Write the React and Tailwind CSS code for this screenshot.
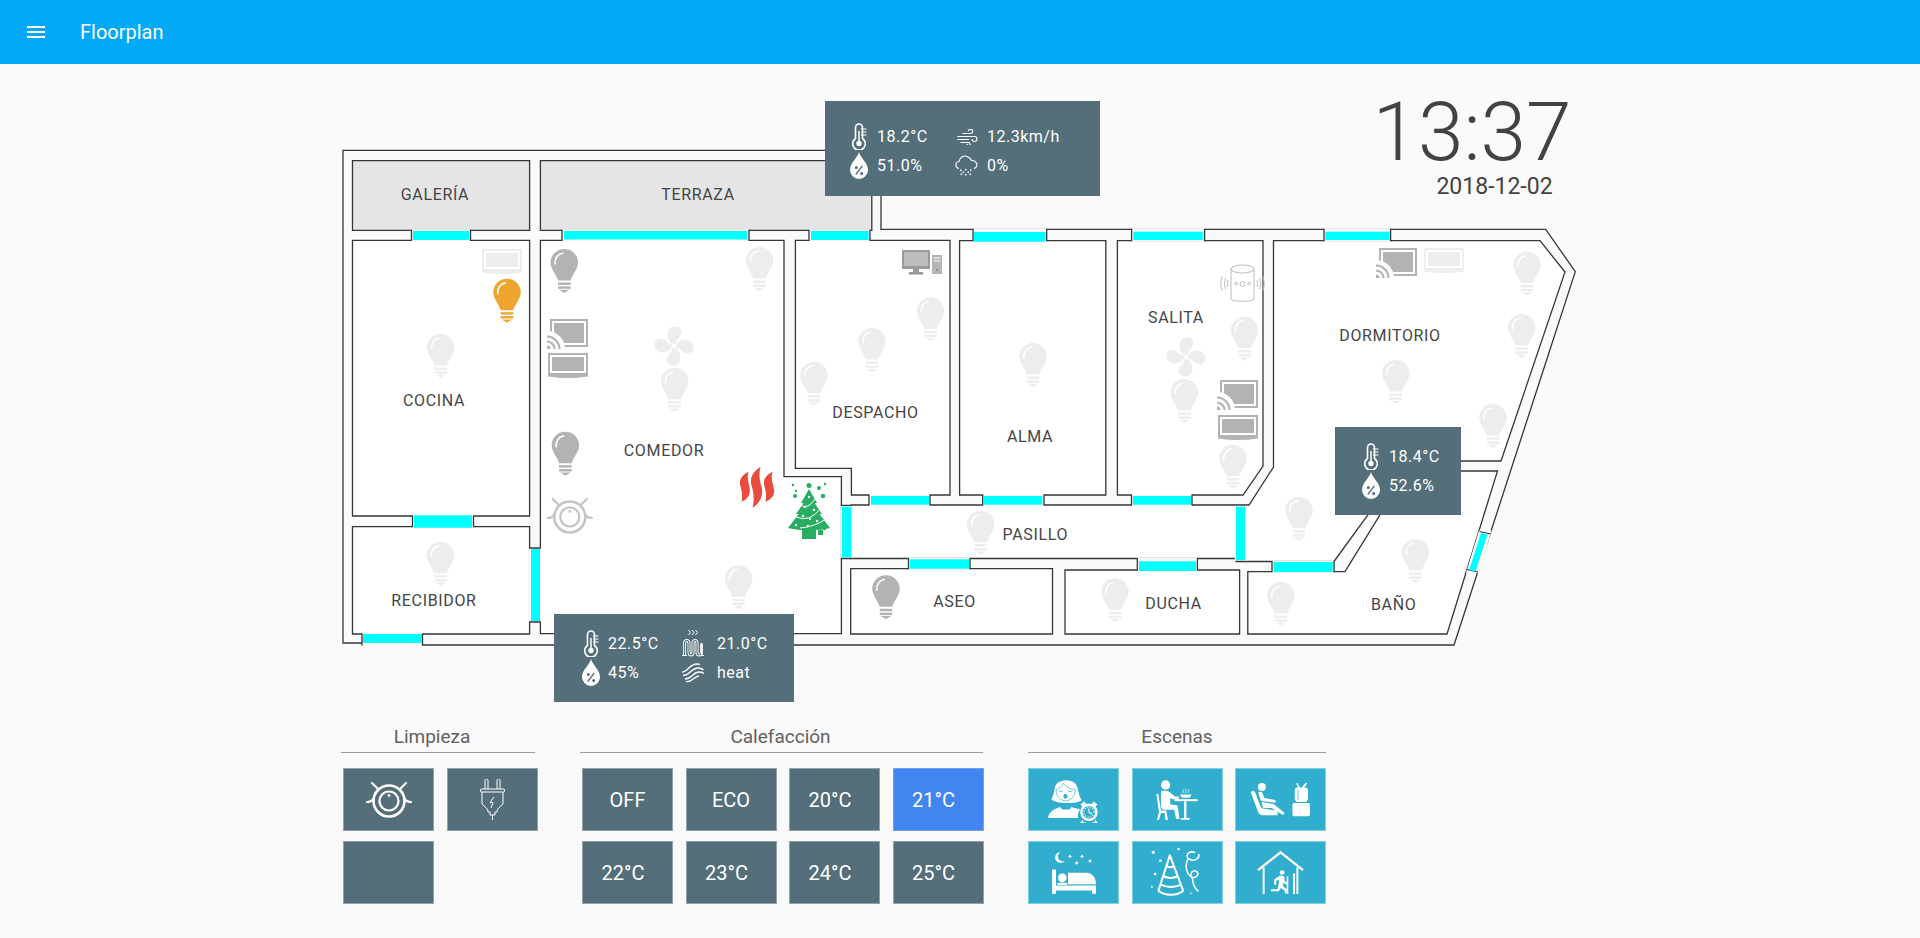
import React from 'react';

const WALL = '#363636';

const ROOMS = [
  { points: '352.5,160.7 529.6,160.7 529.6,230.3 352.5,230.3', fill: '#e5e5e5' }, // galeria
  { points: '540.4,160.7 871.8,160.7 871.8,230.3 540.4,230.3', fill: '#e5e5e5' }, // terraza
  { points: '352.5,240.3 529.6,240.3 529.6,516 352.5,516' }, // cocina
  { points: '352.5,526.7 529.6,526.7 529.6,634 352.5,634' }, // recibidor
  { points: '540.4,240.3 784,240.3 784,476.7 841.4,476.7 841.4,633.7 540.4,633.7' }, // comedor
  { points: '795.4,240.3 950,240.3 950,495 851.4,495 851.4,468.3 795.4,468.3' }, // despacho
  { points: '959.6,240.7 1105.8,240.7 1105.8,495 959.6,495' }, // alma
  { points: '1117.4,240.7 1263,240.7 1263,466 1243,495 1117.4,495' }, // salita
  { points: '851.4,505 1236,505 1236,558.5 851.4,558.5' }, // pasillo
  { points: '1273.5,240.7 1540,240.7 1565,272 1501,461 1407,461 1334,561.5 1245,561.5 1245,505 1249,505 1273.5,467' }, // dormitorio
  { points: '850.7,568.7 1052.5,568.7 1052.5,634 850.7,634' }, // aseo
  { points: '1065,570 1239.6,570 1239.6,634 1065,634' }, // ducha
  { points: '1247.8,571.7 1345,571.7 1407,471 1497.5,471 1447,634 1247.8,634' }, // bano
];

const H_DOORS = [
  [413, 469, 231, 240, 411.5, 470.5, 230.3, 240.3],
  [564, 747, 231, 239.5, 562, 749, 230.3, 240.3],
  [811, 868.6, 231, 240, 809, 870, 230.3, 240.3],
  [974, 1045.3, 232, 241.7, 973, 1046.7, 229.4, 240.7],
  [1133.4, 1202.8, 231.7, 240, 1131.6, 1204.6, 229.4, 240.7],
  [1325.4, 1389.6, 231.7, 240, 1324, 1390.6, 229.4, 240.7],
  [414, 472, 515.3, 527.7, 412.5, 473.5, 516, 526.7],
  [363, 422, 634, 643, 362, 422.5, 634, 645],
  [871, 929, 496, 504.7, 869, 930, 495, 505],
  [983.7, 1042.3, 496, 504.7, 982.7, 1044, 495, 505],
  [1133, 1191, 496, 504.7, 1131.5, 1192, 495, 505],
  [910, 969, 559.3, 568.7, 908.5, 970, 558.5, 568.7],
  [1139, 1196, 561.3, 571, 1137.3, 1197.4, 558.5, 570],
  [1273.5, 1332.7, 562, 572, 1272, 1334, 561.5, 571.7],
];

const V_DOORS = [
  [531, 540, 549, 621, 529.6, 540.4, 548, 622],
  [841.8, 851.4, 506.7, 557.3, 841.4, 851.4, 505.3, 558.5],
  [1236, 1245, 506.7, 560, 1236, 1245, 505, 561.5],
];

const BULBS = [
  [564.3, 249, '#b3b3b3'], [759.6, 247, '#ededed'], [507, 278.7, '#eea630'], [440.7, 334, '#ededed'],
  [674.6, 367.7, '#ededed'], [872, 328, '#ededed'], [814, 361.7, '#ededed'], [930.5, 297.3, '#ededed'],
  [1033, 343, '#ededed'], [1244.5, 316.7, '#ededed'], [1184.4, 379, '#ededed'], [1527, 251.5, '#ededed'],
  [1521.7, 314, '#ededed'], [1395.7, 360, '#ededed'], [1493, 404, '#ededed'], [565.4, 431.7, '#b3b3b3'],
  [440.4, 541.7, '#ededed'], [738.6, 565.3, '#ededed'], [1233, 444.7, '#ededed'], [980.7, 510.7, '#ededed'],
  [1299, 496.7, '#ededed'], [886, 575.3, '#b3b3b3'], [1115, 578.3, '#ededed'], [1280.8, 582, '#ededed'],
  [1415.5, 539, '#ededed'],
];

const LABELS = [
  ['GALERÍA', 435, 194], ['TERRAZA', 698, 194], ['COCINA', 434, 400.7], ['COMEDOR', 664, 450.7],
  ['RECIBIDOR', 434, 600.7], ['DESPACHO', 875.5, 412.3], ['ALMA', 1030, 436.7], ['PASILLO', 1035.3, 534.7],
  ['ASEO', 954.5, 601.7], ['DUCHA', 1173.5, 603.7], ['BAÑO', 1393.7, 604.7], ['SALITA', 1176, 317],
  ['DORMITORIO', 1390, 335.7],
];

function Bulb({ x, y, color }) {
  return (
    <g transform={`translate(${x - 13.75} ${y})`}>
      <path d="M13.75 0C21.5 0 27.5 6 27.5 13.5C27.5 20 22.5 24 20 31.5H7.5C5 24 0 20 0 13.5C0 6 6 0 13.75 0Z" fill={color} />
      <path d="M4.6 15C4 9.5 7 5 12 4.2" fill="none" stroke="#fff" strokeWidth="1.6" strokeLinecap="round" />
      <rect x="7.5" y="33.5" width="12.5" height="2.4" fill={color} />
      <rect x="7.5" y="37.4" width="12.5" height="2.4" fill={color} />
      <path d="M8.5 40.8H19L13.75 44Z" fill={color} />
    </g>
  );
}

function CastTv({ x, y }) {
  return (
    <g transform={`translate(${x} ${y})`}>
      <rect x="3" y="0" width="38" height="28" fill="#b3b3b3" />
      <rect x="5" y="2" width="34" height="24" fill="#fff" />
      <rect x="7" y="4" width="30" height="20" fill="#b3b3b3" />
      <path d="M0 30V12A18 18 0 0 1 18 30Z" fill="#fff" />
      <path d="M0 17.5A12.5 12.5 0 0 1 12.5 30M0 22.5A7.5 7.5 0 0 1 7.5 30" fill="none" stroke="#b3b3b3" strokeWidth="2.2" />
      <path d="M0 26.5A3.5 3.5 0 0 1 3.5 30H0Z" fill="#b3b3b3" />
    </g>
  );
}

function Tv({ x, y, color }) {
  return (
    <g transform={`translate(${x} ${y})`}>
      <rect x="0" y="0" width="40" height="22" fill={color} />
      <rect x="2" y="2" width="36" height="18" fill="#fff" />
      <rect x="4" y="4" width="32" height="14" fill={color} />
      <path d="M0 21.5H40V23.5Q20 26.5 0 23.5Z" fill={color} />
    </g>
  );
}

function Fan({ x, y }) {
  const blade = 'M17.5 15.5C12.5 11 13 .5 20.5 .3C27.5 0 28.5 6.500 24 11C21.800 13 21.500 15 22 16.500Z';
  return (
    <g transform={`translate(${x - 2} ${y - 1.8}) scale(1.1)`} fill="#ededed">
      <path d={blade} />
      <path d={blade} transform="rotate(90 20 18)" />
      <path d={blade} transform="rotate(180 20 18)" />
      <path d={blade} transform="rotate(270 20 18)" />
    </g>
  );
}

function RoombaShape({ color }) {
  return (
    <g fill="none" stroke={color} strokeLinecap="round">
      <circle cx="23" cy="19" r="15.500" strokeWidth="2.600" />
      <circle cx="23" cy="19" r="9.500" strokeWidth="2.200" />
      <circle cx="23" cy="13.500" r="1.400" fill={color} strokeWidth="0" />
      <path d="M6 1L12 7M40 1L34 7" strokeWidth="2.200" />
      <path d="M1 20Q5 20 7.500 17M45 20Q41 20 38.500 17" strokeWidth="2.200" />
    </g>
  );
}

function Tree({ x, y }) {
  return (
    <g transform={`translate(${x} ${y})`}>
      <path d="M21 6L29 20H26.500L34 31H31.500L42 45C30 48 12 48 0 45L10.500 31H8L15.500 20H13Z" fill="#27ae60" />
      <rect x="14" y="44" width="14" height="12" fill="#27ae60" />
      <path d="M30 47h5v5h-5zM35 44h3v3h-3z" fill="#27ae60" />
      <path d="M12 22Q20 27 27 16M8 34Q22 40 33 25M12 45Q26 44 38 36" fill="none" stroke="#fff" strokeWidth="1" />
      <g fill="#fff">
        <circle cx="21" cy="14" r="1.200" /><circle cx="17" cy="24" r="1.200" /><circle cx="26" cy="27" r="1.200" />
        <circle cx="15" cy="33" r="1.200" /><circle cx="22" cy="36" r="1.200" /><circle cx="29" cy="38" r="1.200" />
        <circle cx="8" cy="42" r="1.200" /><circle cx="20" cy="43" r="1.200" />
      </g>
      <g fill="#27ae60">
        <circle cx="21" cy="2.500" r="2.500" /><circle cx="5" cy="2" r="1.200" /><circle cx="37" cy="1" r="1.200" />
        <circle cx="8" cy="8" r="1.200" /><circle cx="31" cy="5" r="2" /><circle cx="7" cy="13" r="2" /><circle cx="35" cy="13" r="2.200" />
      </g>
    </g>
  );
}

function Floor() {
  return (
    <svg width="1920" height="658" viewBox="0 64 1920 658" className="absolute left-0 top-0">
      <polygon
        points="343,150.3 881,150.3 881,229.4 1545.700,229.4 1575.300,271.700 1454,645 422,645 422,643 343,643"
        fill="#fafafa"
        stroke={WALL}
        strokeWidth="1.300"
      />
      {ROOMS.map((r) => (
        <polygon key={r.points} points={r.points} fill={r.fill || '#fff'} stroke={WALL} strokeWidth="1.300" />
      ))}

      {H_DOORS.map(([x1, x2, y1, y2, capL, capR, top, bottom]) => (
        <g key={`${x1}-${y1}`}>
          <rect x={capL} y={top - 1} width={capR - capL} height={bottom - top + 2} fill="#fafafa" />
          <path d={`M${capL} ${top - 0.6}V${bottom + 0.6}M${capR} ${top - 0.6}V${bottom + 0.6}`} stroke={WALL} strokeWidth="1.300" />
          <rect x={x1} y={y1} width={x2 - x1} height={y2 - y1} fill="#00ffff" />
        </g>
      ))}
      {V_DOORS.map(([x1, x2, y1, y2, left, right, capT, capB]) => (
        <g key={`${x1}-${y1}`}>
          <rect x={left - 1} y={capT} width={right - left + 2} height={capB - capT} fill="#fafafa" />
          <path d={`M${left - 0.6} ${capT}H${right + 0.6}M${left - 0.6} ${capB}H${right + 0.6}`} stroke={WALL} strokeWidth="1.300" />
          <rect x={x1} y={y1} width={x2 - x1} height={y2 - y1} fill="#00ffff" />
        </g>
      ))}
      {/* bano window on the slanted wall */}
      <polygon points="1479,530.500 1491.500,530.500 1479,573 1466,573" fill="#fafafa" />
      <path d="M1479.500 531.500L1490.500 534M1467 569.500L1478 572" stroke={WALL} strokeWidth="1.200" />
      <polygon points="1481,533 1487.500,534.500 1475.500,571.500 1469,570" fill="#00ffff" />

      {BULBS.map(([x, y, color]) => (
        <Bulb key={`${x}-${y}`} x={x} y={y} color={color} />
      ))}

      <Tv x={482} y={249} color="#ededed" />
      <CastTv x={547} y={319} />
      <Tv x={548} y={353} color="#b3b3b3" />
      <CastTv x={1217} y={380} />
      <Tv x={1218} y={415} color="#b3b3b3" />
      <CastTv x={1376} y={248} />
      <Tv x={1424} y={248} color="#ededed" />
      <Fan x={654} y={328} />
      <Fan x={1166} y={339} />

      {/* computer */}
      <g transform="translate(902 250)">
        <rect x="0" y="0" width="28" height="19" rx="1" fill="#9a9a9a" />
        <rect x="2" y="2" width="24" height="14" fill="#bdbdbd" />
        <path d="M11 19h6v3h4v2.500H7V22h4z" fill="#9a9a9a" />
        <rect x="30" y="5" width="10" height="19" fill="#b5b5b5" />
        <path d="M31.500 8h7M31.500 11h7" stroke="#fff" strokeWidth="1" />
        <circle cx="35" cy="20" r="1" fill="#777" />
      </g>

      {/* speaker */}
      <g transform="translate(1220 264)" fill="none" stroke="#bdbdbd" strokeWidth="1">
        <path d="M11 5V35C11 38 34 38 34 35V5" />
        <ellipse cx="22.500" cy="5" rx="11.500" ry="4" />
        <circle cx="22.500" cy="20" r="2.500" />
        <circle cx="16" cy="19.500" r="1.300" />
        <circle cx="29" cy="19.500" r="1.300" />
        <path d="M5.500 14Q3 19.500 5.500 25M2.500 12Q-1 19.500 2.500 27M8 16Q6.500 19.500 8 23M39.500 14Q42 19.500 39.500 25M42.500 12Q46 19.500 42.500 27M37 16Q38.500 19.500 37 23" />
      </g>

      <g transform="translate(546.800 498)">
        <RoombaShape color="#c4c4c4" />
      </g>

      {/* heater */}
      <g transform="translate(739.600 466.700)" fill="#e74c3c">
        <path d="M9 5C1 9 -1 14 1 20C2.500 25 3 29 2 35C9 32 11 27 10 21C9 15 7 11 9 5Z" />
        <path d="M21 0C12 6 10 12 12 19C14 25 15 33 13 41C21 36 24 28 22 20C20 14 19 7 21 0Z" />
        <path d="M33 5C25 9 23 14 25 20C26.500 25 27 29 26 35C33 32 36 27 34 21C33 15 31 11 33 5Z" />
      </g>

      <Tree x={788} y={483} />

      {LABELS.map(([text, x, y]) => (
        <text key={text} x={x} y={y} textAnchor="middle" dominantBaseline="central" className="fill-[#454545] text-[16px] tracking-[0.65px]">
          {text}
        </text>
      ))}
    </svg>
  );
}

function Thermometer() {
  return (
    <svg width="15" height="27" viewBox="0 0 15 27" fill="none" stroke="#fff">
      <path d="M3.500 15.500V4.500A3.500 3.500 0 0 1 10.500 4.500V15.500A6.300 6.300 0 1 1 3.500 15.500Z" strokeWidth="1.600" />
      <path d="M7 8V18" strokeWidth="1.500" />
      <circle cx="7" cy="20.500" r="2.700" fill="#fff" strokeWidth="0" />
      <path d="M9 6H14.500M9 9H14.500M9 12H14.500" strokeWidth="1.200" />
    </svg>
  );
}

function Drop() {
  return (
    <svg width="18" height="27" viewBox="0 0 18 27">
      <path d="M9 0C10.500 6 18 11 18 18A9 9 0 0 1 0 18C0 11 7.500 6 9 0Z" fill="#fff" />
      <path d="M5.800 22.500L12.200 14" stroke="#546e7a" strokeWidth="1.300" />
      <circle cx="6.300" cy="15.500" r="1.500" fill="#546e7a" />
      <circle cx="11.700" cy="21.500" r="1.500" fill="#546e7a" />
    </svg>
  );
}

function Wind() {
  return (
    <svg width="22" height="16" viewBox="0 0 21 16" fill="none" stroke="#fff" strokeWidth="1.100">
      <path d="M5 4.500H13A2.200 2.200 0 1 0 10.800 2.300M0 7.500H17A2.500 2.500 0 1 1 14.500 10M0 10.500H11.500M3 13.500H11A1.500 1.500 0 1 1 9.500 15" />
    </svg>
  );
}

function RainCloud() {
  return (
    <svg width="23" height="21" viewBox="0 0 23 21" fill="none" stroke="#fff">
      <path d="M4 13.500C0 13 -.3 7 4 6.500C4.500 2.500 9 -.5 13 2C15.500 3 16 4.500 16.500 5.500C22 5 24 12 19 13.500" strokeWidth="1.100" />
      <path d="M6 14.500L5.500 16M11 14L10.500 15.500M16 14.500L15.500 16M8.500 16.500L8 18M13.500 16.500L13 18M6.500 18.500L6 20M11 19L10.500 20.500M15.500 18.500L15 20" strokeWidth="1.400" />
    </svg>
  );
}

function Radiator() {
  const coil = 'M2.500 25V13.500C2.500 9.500 7 9.500 7 13.500V22C7 26 11 26 11 22V13.500C11 9.500 15 9.500 15 13.500V22C15 26 19.500 26 19.500 22V13.500';
  return (
    <svg width="22" height="27" viewBox="0 0 22 27" fill="none">
      <path d="M6.500 0L8.500 2.500L6.500 5M10 0L12 2.500L10 5M13.500 0L15.500 2.500L13.500 5" stroke="#fff" strokeWidth="1" />
      <path d={coil} stroke="#fff" strokeWidth="3" />
      <path d={coil} stroke="#546e7a" strokeWidth="1.200" />
      <path d="M0 25.500H5M19.500 13V25.500M17.500 25.500H22" stroke="#fff" strokeWidth="1" />
    </svg>
  );
}

function HeatMode() {
  return (
    <svg width="22" height="20" viewBox="0 0 22 20" fill="none" stroke="#fff" strokeWidth="1.300">
      <path d="M0 9C6 9 7 1 15 1C16 1 17 1 18 1.500" />
      <path d="M1 12.500C8 12.500 9 5 16 5C18 5 20 5.500 21.500 7" />
      <path d="M3 16C10 16 11 9 17 9C19 9 20.500 9.500 22 10.500" />
      <path d="M4 18.500C10 20 12 13 17 13" />
    </svg>
  );
}

function Reading({ icon, slot, children }) {
  return (
    <div className="flex h-[29px] items-center whitespace-nowrap text-[16px] tracking-[0.5px] text-white">
      <span className={`flex items-center ${slot}`}>{icon}</span>
      <span>{children}</span>
    </div>
  );
}

function Clock() {
  return (
    <div className="absolute left-[1372px] top-[27px] w-[200px] text-[#424242]">
      <div className="text-center text-[82px] font-light leading-[82px]">13:37</div>
      <div className="mt-[3px] pl-[45px] text-center text-[23px] leading-[22px]">2018-12-02</div>
    </div>
  );
}

function Group({ title, titleClass, className, grid, children }) {
  return (
    <div className={className}>
      <div className={`h-[31px] border-b border-[#9e9e9e] text-center text-[19px] leading-[30px] text-[#616161] ${titleClass}`}>{title}</div>
      <div className={`mt-[15px] grid gap-x-[12.5px] gap-y-[10px] ${grid}`}>{children}</div>
    </div>
  );
}

function Tile({ className, children }) {
  return (
    <div className={`flex h-[63px] w-[91px] items-center justify-center border text-[20px] text-white ${className}`}>
      {children}
    </div>
  );
}

const slate = 'bg-[#546e7a] border-[#8fa1aa]';
const teal = 'bg-[#31aecd] border-[#7fd0e3]';

function Plug() {
  return (
    <svg width="25" height="41" viewBox="0 0 25 41" fill="none" stroke="#fff" strokeWidth="1">
      <path d="M5 10V1.500A1.200 1.200 0 0 1 8 1.500V10M17 10V1.500A1.200 1.200 0 0 1 20 1.500V10" />
      <rect x=".5" y="10" width="24" height="3" rx="1" />
      <path d="M2 13V24C2 27 8 28 8 33H10V36H15V33H17C17 28 23 27 23 24V13" />
      <path d="M12.500 36V41" />
      <path d="M14 18L10 23.500H13L11 29" />
    </svg>
  );
}

function WakeUp() {
  return (
    <svg width="51" height="47" viewBox="0 0 152 140">
      <path d="M10 70C16 58 18 50 20 36C24 6 80 4 88 34C91 50 94 60 100 72C86 84 26 84 10 70Z" fill="#fff" />
      <path d="M24 40C34 38 40 32 46 22C54 34 66 38 80 40C82 62 66 74 52 74C38 74 24 62 24 40Z" fill="#fff" stroke="#31aecd" strokeWidth="2" />
      <path d="M32 44Q38 49 44 44M60 44Q66 49 72 44" fill="none" stroke="#31aecd" strokeWidth="2.500" />
      <ellipse cx="52" cy="60" rx="6" ry="7.500" fill="#31aecd" />
      <path d="M0 125C3 105 20 98 36 92L42 100H64L70 92C78 95 86 96 96 100C90 108 88 116 90 125Z" fill="#fff" />
      <g>
        <circle cx="122" cy="108" r="26" fill="#fff" />
        <circle cx="122" cy="108" r="19" fill="#31aecd" />
        <circle cx="122" cy="108" r="15" fill="none" stroke="#fff" strokeWidth="4" strokeDasharray="3 5" />
        <path d="M122 96V108L131 114" fill="none" stroke="#fff" strokeWidth="3" />
        <path d="M97 84L108 76L114 83L103 92ZM147 84L136 76L130 83L141 92Z" fill="#fff" />
        <path d="M104 132L98 140H112M140 132L146 140H132" fill="none" stroke="#fff" strokeWidth="4" />
      </g>
    </svg>
  );
}

function Eating() {
  return (
    <svg width="42" height="40" viewBox="0 0 125 121" fill="#fff">
      <circle cx="28" cy="15" r="14" />
      <path d="M14 34C24 30 36 32 42 38L56 50H68V58H48L42 54V74L58 76C62 76 64 78 65 82L70 118H60L54 90H24C18 90 15 86 14 80Z" />
      <path d="M0 42H6L14 92H30L35 121H28L25 100H14L8 121H2L8 96Z" />
      <rect x="55" y="58" width="70" height="6" />
      <rect x="84" y="64" width="7" height="52" />
      <rect x="74" y="115" width="27" height="5" rx="2" />
      <path d="M72 44H106C106 50 100 54 96 54H82C78 54 72 50 72 44Z" />
      <path d="M82 28L80 40M90 26L88 40M98 28L96 40" stroke="#fff" strokeWidth="2" />
    </svg>
  );
}

function Relax() {
  return (
    <svg width="59" height="35" viewBox="0 0 178 105" fill="#fff">
      <circle cx="33" cy="15" r="12" />
      <path d="M22 30C28 28 34 30 36 36L40 48L72 54C76 56 76 62 72 62L36 58C32 58 30 56 28 52Z" />
      <path d="M32 60L68 66L100 92C102 96 98 100 94 98L62 78H36Z" />
      <path d="M0 32C0 28 6 24 10 28C14 32 16 38 18 46L30 76C32 80 34 80 38 80L76 86C80 88 82 94 80 100H36C28 100 24 96 22 92Z" />
      <path d="M140 2L147 16H153L165 2L169 5L160 16H164C170 16 172 20 172 24V48C172 56 168 60 162 60H142C136 60 132 56 132 48V24C132 20 134 16 140 16H143L136 5Z" />
      <path d="M142 22V54" fill="none" stroke="#31aecd" strokeWidth="2" />
      <rect x="125" y="63" width="53" height="40" rx="5" />
    </svg>
  );
}

function Sleep() {
  return (
    <svg width="44" height="42" viewBox="0 0 132 125" fill="#fff">
      <path d="M26 0A16 16 0 1 0 38 26A14 14 0 0 1 26 0Z" />
      <path d="M54 6l2 4.500 4.500 2-4.500 2-2 4.500-2-4.500-4.500-2 4.500-2zM90 6l2 4.500 4.500 2-4.500 2-2 4.500-2-4.500-4.500-2 4.500-2zM74 26l2 4.500 4.500 2-4.500 2-2 4.500-2-4.500-4.500-2 4.500-2zM114 20l2 4.500 4.500 2-4.500 2-2 4.500-2-4.500-4.500-2 4.500-2z" />
      <rect x="0" y="52" width="12" height="73" />
      <rect x="12" y="100" width="120" height="15" />
      <rect x="120" y="112" width="12" height="13" />
      <circle cx="31" cy="77" r="13" />
      <path d="M48 62H102C120 62 132 76 132 96H48Z" />
      <path d="M16 92H46V98H16Z" />
    </svg>
  );
}

function Party() {
  return (
    <svg width="52" height="49" viewBox="0 0 155 147" fill="none" stroke="#fff">
      <path d="M56 22L22 128C40 144 78 144 96 128Z" strokeWidth="6" strokeLinejoin="round" />
      <path d="M46 54Q58 62 68 54M36 84Q58 96 80 84M28 110Q60 124 90 110" strokeWidth="6" />
      <g fill="#fff" stroke="none">
        <circle cx="6" cy="13" r="4.500" /><circle cx="28" cy="38" r="4" /><circle cx="82" cy="3" r="4" />
        <circle cx="12" cy="78" r="4" /><circle cx="2" cy="116" r="3" /><circle cx="119" cy="136" r="2.500" />
      </g>
      <path d="M132 14C112 6 102 22 112 32C126 44 148 30 142 18M112 32C100 48 104 78 122 88C136 92 146 78 136 70C126 64 114 76 122 88C128 100 122 116 142 130" strokeWidth="4.500" />
    </svg>
  );
}

function Home() {
  return (
    <svg width="47" height="43" viewBox="0 0 142 130">
      <path d="M3 58L71 4L139 58" fill="none" stroke="#fff" strokeWidth="7" />
      <path d="M20 50V130M122 50V130M112 68V130" fill="none" stroke="#fff" strokeWidth="6" />
      <path d="M92 76V130" fill="none" stroke="#fff" strokeWidth="5" />
      <circle cx="76" cy="65" r="7" fill="#fff" />
      <path d="M70 74L82 76L84 92L92 96L91 102L78 96L80 108L90 116V128H84V120L72 112L66 122H42V116H62L66 98V86L58 90V102H52V86Z" fill="#fff" />
    </svg>
  );
}

export default function App() {
  return (
    <div className="min-h-screen overflow-hidden bg-[#fafafa] font-['Roboto',sans-serif]">
      <header className="flex h-16 items-center bg-[#03a9f4] pl-6 text-white">
        <svg width="24" height="24" viewBox="0 0 24 24" fill="#fff">
          <path d="M3 18h18v-2H3v2zm0-5h18v-2H3v2zm0-7v2h18V6H3z" />
        </svg>
        <h1 className="ml-[32px] text-[20px] font-normal">Floorplan</h1>
      </header>

      <main>
        <div className="relative h-[658px]">
          <Floor />

          <div className="absolute left-[825px] top-[37px] flex h-[95px] w-[275px] pl-[25px] pt-[21px] bg-[#546e7a]">
            <div className="w-[105px]">
              <Reading icon={<Thermometer />} slot="w-[27px] pl-[2px]">18.2°C</Reading>
              <Reading icon={<Drop />} slot="w-[27px]">51.0%</Reading>
            </div>
            <div>
              <Reading icon={<Wind />} slot="w-[32px] pl-[2px]">12.3km/h</Reading>
              <Reading icon={<RainCloud />} slot="w-[32px]">0%</Reading>
            </div>
          </div>

          <div className="absolute left-[554px] top-[550px] flex h-[88px] w-[240px] pl-[28px] pt-[15px] bg-[#546e7a]">
            <div className="w-[100px]">
              <Reading icon={<Thermometer />} slot="w-[26px] pl-[2px]">22.5°C</Reading>
              <Reading icon={<Drop />} slot="w-[26px]">45%</Reading>
            </div>
            <div>
              <Reading icon={<Radiator />} slot="w-[35px]">21.0°C</Reading>
              <Reading icon={<HeatMode />} slot="w-[35px]">heat</Reading>
            </div>
          </div>

          <div className="absolute left-[1335px] top-[363px] h-[88px] w-[126px] pl-[27px] pt-[15px] bg-[#546e7a]">
            <Reading icon={<Thermometer />} slot="w-[27px] pl-[2px]">18.4°C</Reading>
            <Reading icon={<Drop />} slot="w-[27px]">52.6%</Reading>
          </div>

          <Clock />
        </div>

        <div className="flex gap-[45px] pl-[341px]">
          <Group title="Limpieza" titleClass="pr-[12px]" className="w-[194px]" grid="grid-cols-[repeat(2,91px)] pl-[2px]">
            <Tile className={slate}>
              <svg width="46" height="36" viewBox="0 0 46 36">
                <RoombaShape color="#fff" />
              </svg>
            </Tile>
            <Tile className={slate}><Plug /></Tile>
            <Tile className={slate} />
          </Group>

          <Group title="Calefacción" titleClass="pr-[2px]" className="w-[403px]" grid="grid-cols-[repeat(4,91px)] pl-[2px]">
            <Tile className={slate}>OFF</Tile>
            <Tile className={slate}>ECO</Tile>
            <Tile className={`${slate} pr-[9px]`}>20°C</Tile>
            <Tile className="border-[#6fa0f5] bg-[#4285f0] pr-[9px]">21°C</Tile>
            <Tile className={`${slate} pr-[9px]`}>22°C</Tile>
            <Tile className={`${slate} pr-[9px]`}>23°C</Tile>
            <Tile className={`${slate} pr-[9px]`}>24°C</Tile>
            <Tile className={`${slate} pr-[9px]`}>25°C</Tile>
          </Group>

          <Group title="Escenas" className="w-[298px]" grid="grid-cols-[repeat(3,91px)]">
            <Tile className={teal}><WakeUp /></Tile>
            <Tile className={teal}><Eating /></Tile>
            <Tile className={teal}><Relax /></Tile>
            <Tile className={teal}><Sleep /></Tile>
            <Tile className={teal}><Party /></Tile>
            <Tile className={teal}><Home /></Tile>
          </Group>
        </div>
      </main>
    </div>
  );
}
